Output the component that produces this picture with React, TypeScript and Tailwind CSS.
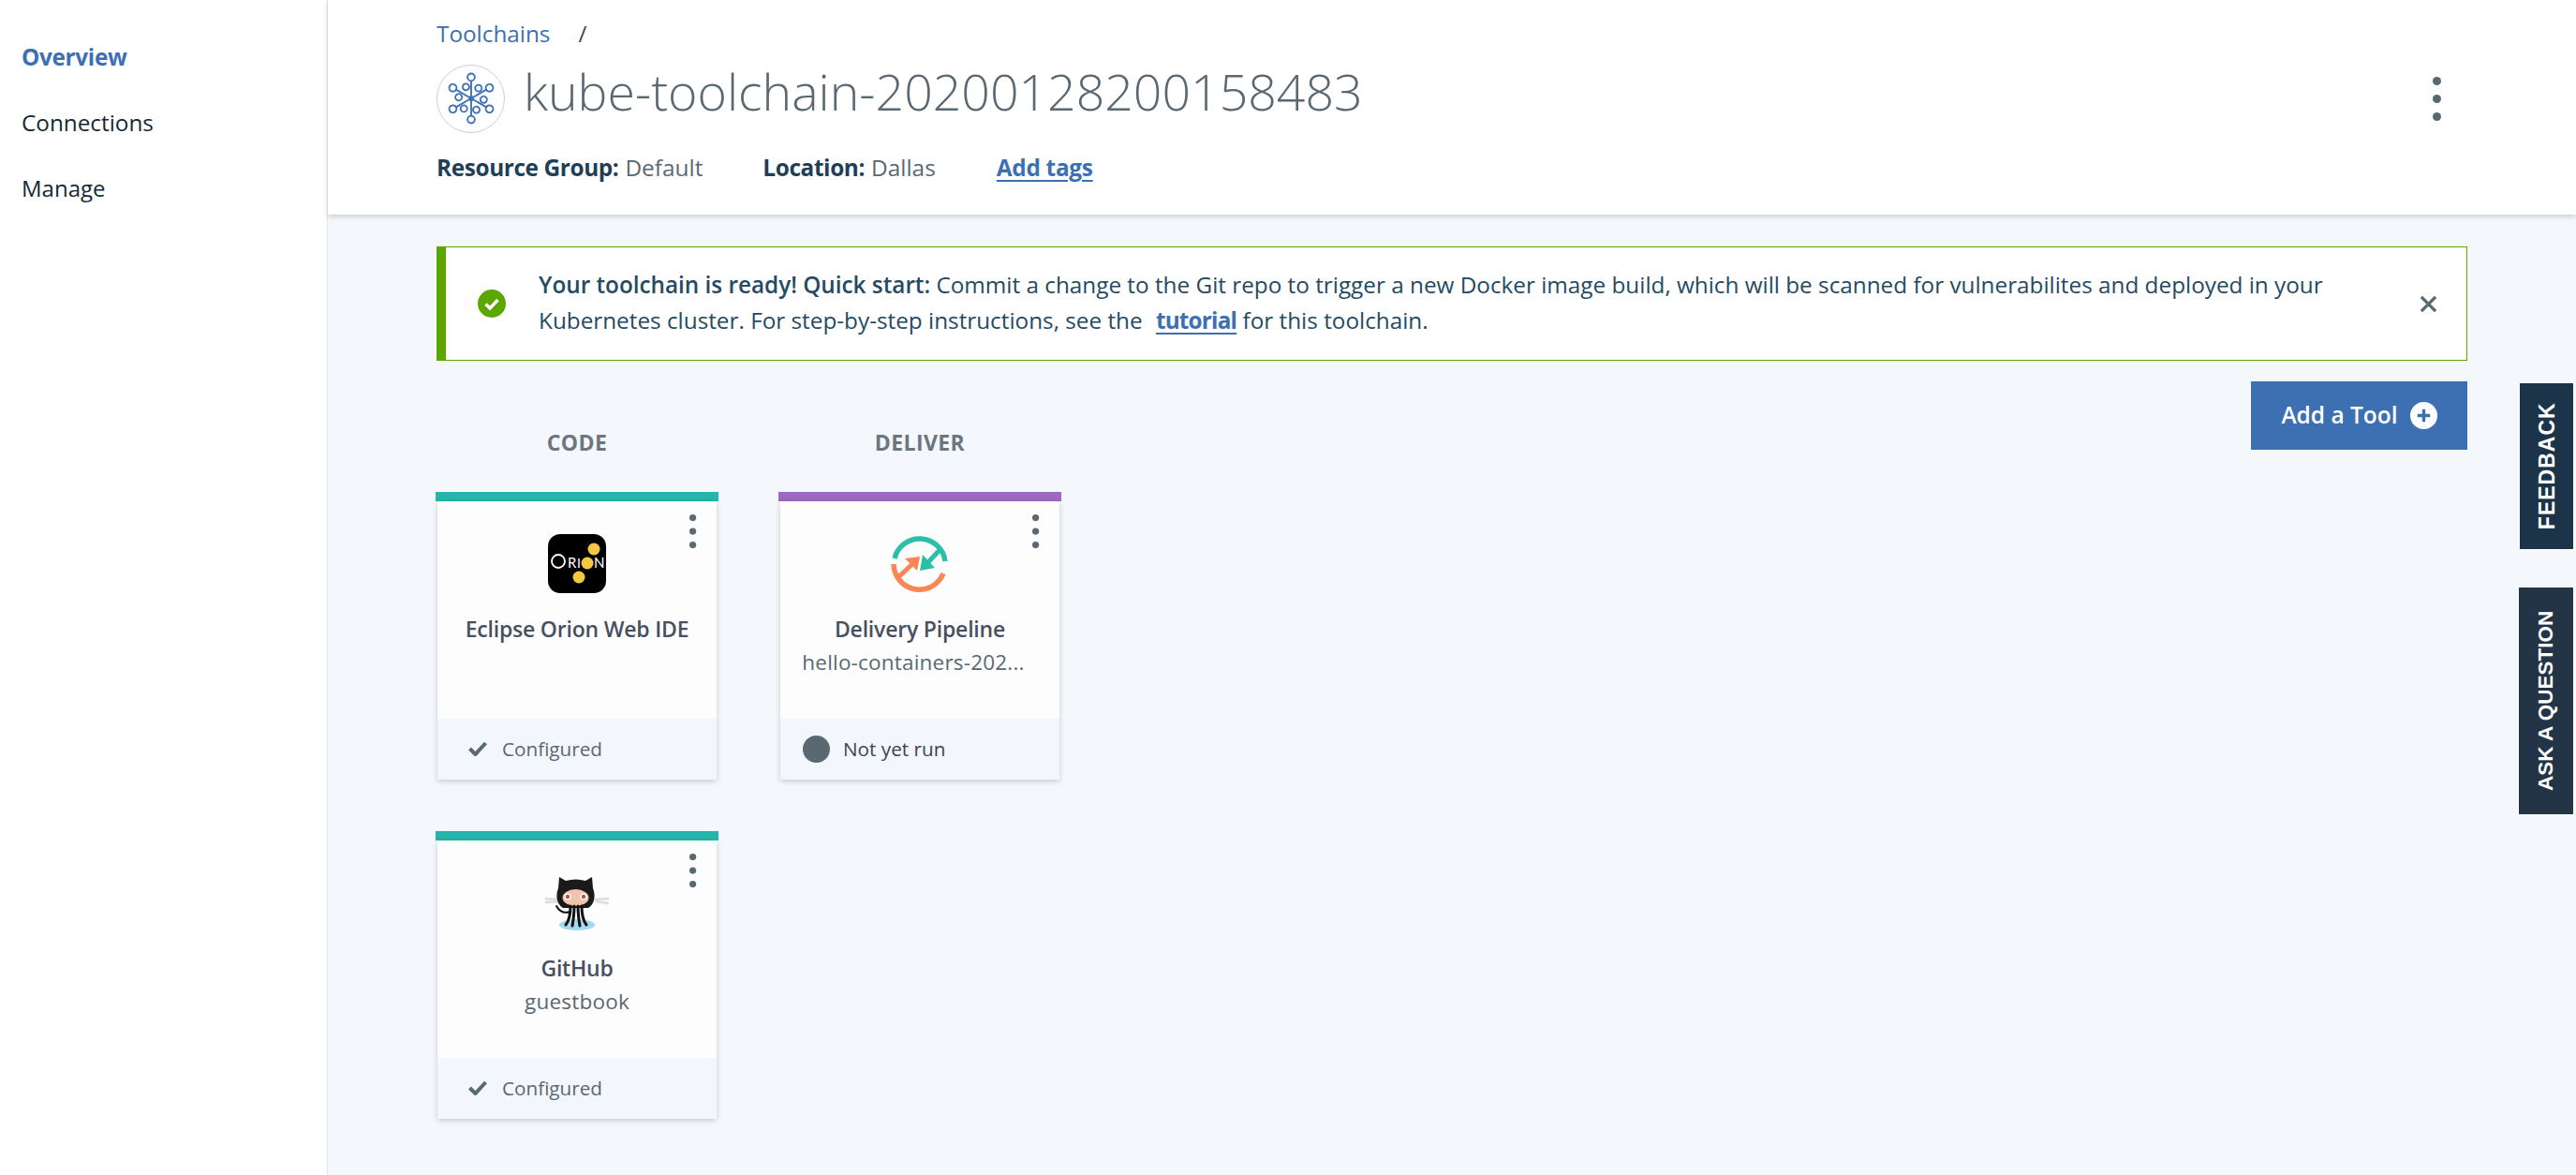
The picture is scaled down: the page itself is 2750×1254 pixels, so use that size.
import React from "react";

const F = "font-['Open_Sans','Noto_Sans',sans-serif]";

function Flake() {
  const pts = [0, 60, 120, 180, 240, 300];
  return (
    <svg viewBox="0 0 72 72" className="w-[56px] h-[56px]" fill="none" stroke="#3d70b2" strokeWidth="2.4">
      {pts.map((a) => (
        <g key={a} transform={`rotate(${a} 36 36)`}>
          <line x1="36" y1="32" x2="36" y2="12" />
          <circle cx="36" cy="7" r="5" fill="#fff" />
          <circle cx="46" cy="22" r="4.5" fill="#fff" />
        </g>
      ))}
      <circle cx="36" cy="36" r="4" fill="#3d70b2" stroke="none" />
    </svg>
  );
}

function Kebab({ r = 3.6, gap = 14.5 }: { r?: number; gap?: number }) {
  const h = gap * 2 + r * 2 + 2;
  return (
    <svg width={r * 2 + 2} height={h} viewBox={`0 0 ${r * 2 + 2} ${h}`} fill="#5a6872">
      {[0, 1, 2].map((i) => (
        <circle key={i} cx={r + 1} cy={r + 1 + i * gap} r={r} />
      ))}
    </svg>
  );
}

function Orion() {
  return (
    <svg viewBox="0 0 64 64" className="w-[64px] h-[64px]">
      <rect x="1" y="0" width="62" height="63" rx="13" fill="#000" />
      <circle cx="50" cy="16" r="6.500" fill="#f5c842" />
      <circle cx="43" cy="31" r="6.500" fill="#f5c842" />
      <circle cx="34" cy="46" r="6.500" fill="#f5c842" />
      <circle cx="12" cy="29" r="7" fill="none" stroke="#fff" strokeWidth="1.8" />
      <text x="22" y="36" fontSize="15" fill="#fff" fontFamily="Lato, sans-serif">R</text>
      <text x="32" y="36" fontSize="14" fill="#fff" fontFamily="Lato, sans-serif">I</text>
      <text x="50" y="36" fontSize="15" fill="#fff" fontFamily="Lato, sans-serif">N</text>
    </svg>
  );
}

function Pipeline() {
  return (
    <svg viewBox="0 0 62 62" className="w-[62px] h-[62px]" fill="none">
      <path d="M4 25A27.500 27.500 0 0 1 58 28" stroke="#2bbfa9" strokeWidth="5.500" />
      <path d="M3 31A27.500 27.500 0 0 0 56 41" stroke="#fb8653" strokeWidth="5.500" />
      <path d="M53 15L39 30" stroke="#2bbfa9" strokeWidth="5" />
      <path d="M31 38L47 35 34 21z" fill="#2bbfa9" />
      <path d="M8 45L23 31" stroke="#fb8653" strokeWidth="5" />
      <path d="M31 23L28 38 15 25z" fill="#fb8653" />
    </svg>
  );
}

function Octocat() {
  return (
    <svg viewBox="0 0 70 60" className="w-[70px] h-[60px]">
      <ellipse cx="35" cy="53" rx="19" ry="6" fill="#a6d8f0" />
      <g stroke="#dcdcdc" strokeWidth="2.500">
        <path d="M1 25l15 1M1 29l15-1M54 26l15-1M54 28l15 2" />
      </g>
      <path d="M16 2l7 4c7-2 14-2 21 0l7-4 1 12c3 7 2 17-5 21H20C13 31 12 21 15 14z" fill="#1a1a1a" />
      <ellipse cx="33.500" cy="24" rx="14" ry="9" fill="#f1c5ab" />
      <circle cx="25" cy="23" r="3.600" fill="#fff" /><circle cx="42" cy="23" r="3.600" fill="#fff" />
      <circle cx="25" cy="23" r="2.200" fill="#a65a50" /><circle cx="42" cy="23" r="2.200" fill="#a65a50" />
      <g stroke="#111" strokeWidth="3" fill="none" strokeLinecap="round">
        <path d="M28 33c0 8-1 15-5 20" /><path d="M32 33c0 8-1 15-2 21" /><path d="M36 33c0 8 1 15 2 21" /><path d="M40 33c0 8 1 15 5 20" />
        <path d="M28 39c-6 2-11 1-15-6" strokeWidth="2" />
      </g>
    </svg>
  );
}

function Check({ className = "" }: { className?: string }) {
  return (
    <svg viewBox="0 0 20 16" className={className} fill="none" stroke="#5a6872" strokeWidth="4">
      <path d="M1.5 8l6 6L18.500 2" />
    </svg>
  );
}

type CardP = {
  bar: string;
  icon: React.ReactNode;
  title: string;
  sub?: string;
  status: "configured" | "notrun";
  subClass?: string;
};

function Card({ bar, icon, title, sub, status, subClass = "" }: CardP) {
  return (
    <div className="w-[302px]">
      <div className={`h-[10px] ${bar}`} />
      <div className="mx-[2px] h-[297px] flex flex-col bg-[#fdfdfe] shadow-[0_2px_6px_rgba(0,0,0,0.18)] relative">
        <div className="absolute right-[21px] top-[13px] leading-none"><Kebab /></div>
        <div className="h-[232px] flex flex-col items-center pt-[35px]">
          <div className="h-[64px] flex items-center justify-center">{icon}</div>
          <div className="mt-[21px] text-[23px] leading-[32px] font-semibold text-[#46505f] tracking-[-0.2px]">{title}</div>
          {sub && <div className={`mt-[4px] text-[22.5px] leading-[32px] text-[#5a6872] tracking-[0.2px] ${subClass}`}>{sub}</div>}
        </div>
        <div className="flex-1 bg-[#f3f6fb] flex items-center">
          {status === "configured" ? (
            <div className="flex items-center pl-[33px]">
              <Check className="w-[20px] h-[16px]" />
              <span className="ml-[16px] text-[20.7px] text-[#5a6872]">Configured</span>
            </div>
          ) : (
            <div className="flex items-center pl-[24px]">
              <span className="w-[29px] h-[29px] rounded-full bg-[#5a6872]" />
              <span className="ml-[14px] text-[20.7px] text-[#3d4550]">Not yet run</span>
            </div>
          )}
        </div>
      </div>
    </div>
  );
}

export default function App() {
  return (
    <div className={`${F} w-[2750px] h-[1254px] overflow-hidden flex bg-[#f4f7fb] relative`}>
      <aside className="w-[350px] shrink-0 bg-white border-r border-[#e4e8ec] pt-[43px] pl-[23px] flex flex-col gap-[35px]">
        <div className="h-[35px] leading-[35px] text-[24.3px] font-bold text-[#3d70b2] tracking-[-0.3px]">Overview</div>
        <div className="h-[35px] leading-[35px] text-[24.3px] text-[#152935]">Connections</div>
        <div className="h-[35px] leading-[35px] text-[24px] text-[#152935]">Manage</div>
      </aside>
      <main className="flex-1 flex flex-col">
        <header className="h-[229px] shrink-0 bg-white shadow-[0_2px_6px_rgba(0,0,0,0.18)] pl-[116px] pr-[140px] relative">
          <div className="pt-[18px] h-[68px] flex items-start text-[24.3px] leading-[36px]">
            <span className="text-[#3d70b2]">Toolchains</span>
            <span className="ml-[30px] text-[#3d4550]">/</span>
          </div>
          <div className="flex items-center h-[74px]">
            <div className="w-[73px] h-[73px] rounded-full border border-[#c9d0d6] flex items-center justify-center">
              <Flake />
            </div>
            <h1 className="ml-[20px] mb-[14px] text-[53.6px] leading-[60px] font-light text-[#5a6872]">kube-toolchain-20200128200158483</h1>
            <div className="ml-auto mr-[3px] leading-none"><Kebab r={4.5} gap={19} /></div>
          </div>
          <div className="mt-[19px] flex items-center text-[24.4px] leading-[36px]">
            <span className="font-bold text-[#1f3f57] tracking-[-0.4px]">Resource Group:</span>
            <span className="ml-[7px] text-[#5a6872]">Default</span>
            <span className="ml-[64px] font-bold text-[#1f3f57] tracking-[-0.4px]">Location:</span>
            <span className="ml-[7px] text-[#5a6872]">Dallas</span>
            <span className="ml-[65px] font-bold text-[#3d70b2] underline decoration-2 underline-offset-4 tracking-[-0.3px]">Add tags</span>
          </div>
        </header>
        <div className="pl-[116px] pr-[116px] pt-[34px]">
          <div className="h-[122px] bg-white border border-[#5aa700] border-l-[10px] flex items-center pl-[34px] pr-[31px]">
            <svg viewBox="0 0 30 30" className="w-[30px] h-[30px] shrink-0">
              <circle cx="15" cy="15" r="15" fill="#5aa700" />
              <path d="M8.500 15.500l4.500 4.500 8.500-9" stroke="#fff" strokeWidth="3.500" fill="none" />
            </svg>
            <p className="ml-[35px] mb-[2px] text-[24.3px] leading-[38.5px] text-[#254a63] w-[1990px]">
              <span className="font-semibold">Your toolchain is ready! Quick start:</span> Commit a change to the Git repo to trigger a new Docker image build, which will be scanned for vulnerabilites and deployed in your Kubernetes cluster. For step-by-step instructions, see the <span className="font-bold text-[#3d70b2] underline decoration-2 underline-offset-4 ml-[8px] tracking-[-0.8px]">tutorial</span> for this toolchain.
            </p>
            <svg viewBox="0 0 20 20" className="w-[19px] h-[19px] ml-auto shrink-0" stroke="#5a6872" strokeWidth="3.500" fill="none">
              <path d="M2 2l16 16M18 2L2 18" />
            </svg>
          </div>
          <div className="flex justify-end mt-[22px] h-[73px]">
            <button className="w-[231px] h-[73px] bg-[#3d70b2] text-white flex items-center justify-center text-[24.5px] font-semibold">
              Add a Tool
              <svg viewBox="0 0 30 30" className="w-[29px] h-[29px] ml-[13px]">
                <circle cx="15" cy="15" r="15" fill="#fff" />
                <path d="M15 8v14M8 15h14" stroke="#3d70b2" strokeWidth="3.500" />
              </svg>
            </button>
          </div>
          <div className="flex gap-[64px] mt-[-31px] ml-[-1px]">
            <div className="w-[302px] flex flex-col">
              <div className="h-[46px] leading-[46px] text-center text-[23px] font-bold text-[#6b7680] tracking-[0.4px]">CODE</div>
              <div className="mt-[30px] flex flex-col gap-[55px]">
                <Card bar="bg-[#25b5ad]" icon={<Orion />} title="Eclipse Orion Web IDE" status="configured" />
                <Card bar="bg-[#25b5ad]" icon={<Octocat />} title="GitHub" sub="guestbook" status="configured" />
              </div>
            </div>
            <div className="w-[302px] flex flex-col">
              <div className="h-[46px] leading-[46px] text-center text-[23px] font-bold text-[#6b7680] tracking-[0.4px]">DELIVER</div>
              <div className="mt-[30px]">
                <Card bar="bg-[#9e68c0]" icon={<Pipeline />} title="Delivery Pipeline" sub="hello-containers-202..." subClass="mr-[14px]" status="notrun" />
              </div>
            </div>
          </div>
        </div>
      </main>
      <div className="absolute right-[2px] top-[408px] w-[59px] h-[179px] bg-[#1c3449] border border-white flex items-center justify-center">
        <span className="font-['Liberation_Sans',sans-serif] -rotate-90 whitespace-nowrap text-white font-bold text-[23px] tracking-[1px]">FEEDBACK</span>
      </div>
      <div className="absolute right-[2px] top-[626px] w-[60px] h-[244px] bg-[#233446] border border-white flex items-center justify-center">
        <span className="font-['Liberation_Sans',sans-serif] -rotate-90 whitespace-nowrap text-white font-bold text-[22.5px]">ASK A QUESTION</span>
      </div>
    </div>
  );
}
